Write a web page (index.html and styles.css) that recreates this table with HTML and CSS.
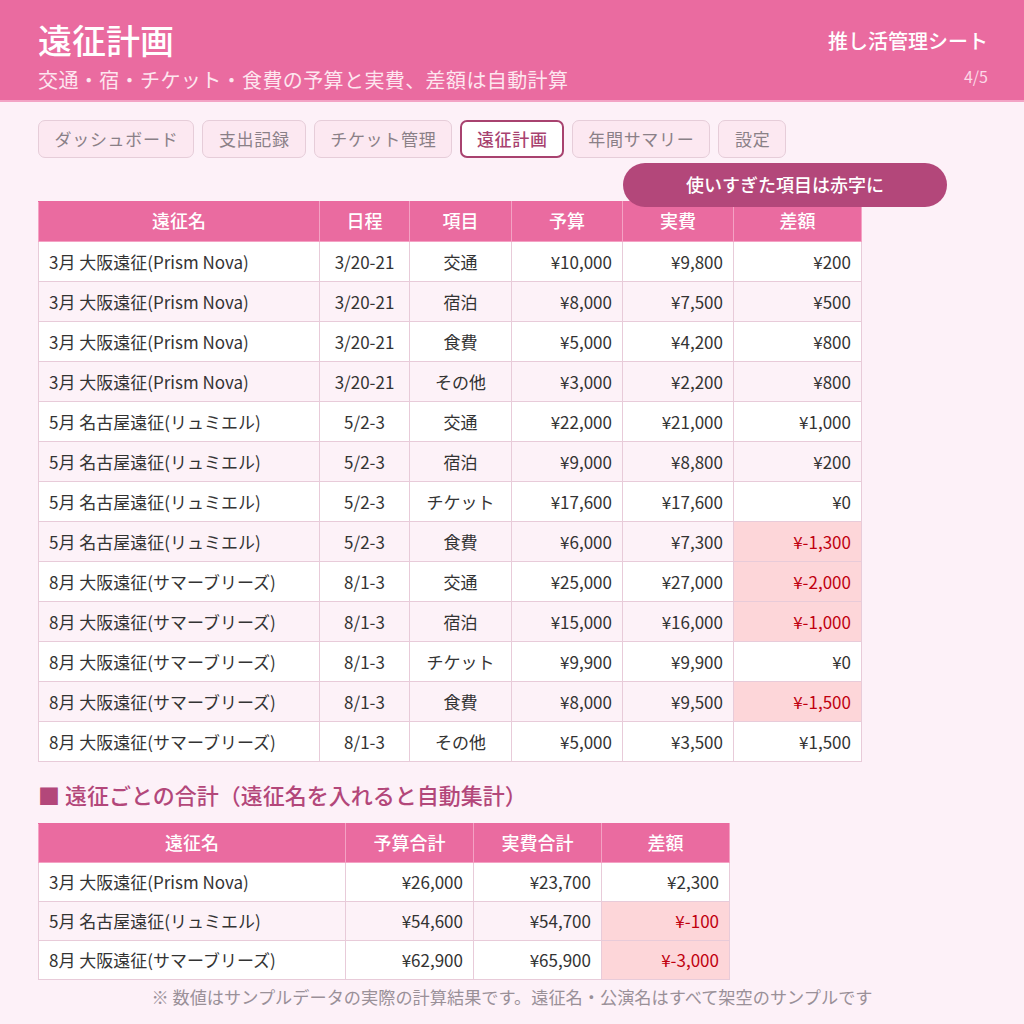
FILE: index.html
```html
<!DOCTYPE html>
<html lang="ja">
<head>
<meta charset="utf-8">
<link rel="stylesheet" href="styles.css">
</head>
<body>
<header class="hdr">
  <div class="hdr-left">
    <h1 class="title">遠征計画</h1>
    <p class="subtitle">交通・宿・チケット・食費の予算と実費、差額は自動計算</p>
  </div>
  <div class="hdr-right">
    <div class="app-name">推し活管理シート</div>
    <div class="page-no">4/5</div>
  </div>
</header>

<main class="main">
  <nav class="tabs">
    <span class="tab">ダッシュボード</span>
    <span class="tab">支出記録</span>
    <span class="tab">チケット管理</span>
    <span class="tab active">遠征計画</span>
    <span class="tab">年間サマリー</span>
    <span class="tab">設定</span>
  </nav>

  <div class="table-wrap">
    <div class="badge">使いすぎた項目は赤字に</div>
    <table class="grid main-table">
      <colgroup>
        <col style="width:281px"><col style="width:90px"><col style="width:102px">
        <col style="width:111px"><col style="width:111px"><col style="width:128px">
      </colgroup>
      <thead>
        <tr><th>遠征名</th><th>日程</th><th>項目</th><th>予算</th><th>実費</th><th>差額</th></tr>
      </thead>
      <tbody>
        <tr><td class="l">3月 大阪遠征(Prism Nova)</td><td class="c">3/20-21</td><td class="c">交通</td><td class="r">¥10,000</td><td class="r">¥9,800</td><td class="r">¥200</td></tr>
        <tr><td class="l">3月 大阪遠征(Prism Nova)</td><td class="c">3/20-21</td><td class="c">宿泊</td><td class="r">¥8,000</td><td class="r">¥7,500</td><td class="r">¥500</td></tr>
        <tr><td class="l">3月 大阪遠征(Prism Nova)</td><td class="c">3/20-21</td><td class="c">食費</td><td class="r">¥5,000</td><td class="r">¥4,200</td><td class="r">¥800</td></tr>
        <tr><td class="l">3月 大阪遠征(Prism Nova)</td><td class="c">3/20-21</td><td class="c">その他</td><td class="r">¥3,000</td><td class="r">¥2,200</td><td class="r">¥800</td></tr>
        <tr><td class="l">5月 名古屋遠征(リュミエル)</td><td class="c">5/2-3</td><td class="c">交通</td><td class="r">¥22,000</td><td class="r">¥21,000</td><td class="r">¥1,000</td></tr>
        <tr><td class="l">5月 名古屋遠征(リュミエル)</td><td class="c">5/2-3</td><td class="c">宿泊</td><td class="r">¥9,000</td><td class="r">¥8,800</td><td class="r">¥200</td></tr>
        <tr><td class="l">5月 名古屋遠征(リュミエル)</td><td class="c">5/2-3</td><td class="c">チケット</td><td class="r">¥17,600</td><td class="r">¥17,600</td><td class="r">¥0</td></tr>
        <tr><td class="l">5月 名古屋遠征(リュミエル)</td><td class="c">5/2-3</td><td class="c">食費</td><td class="r">¥6,000</td><td class="r">¥7,300</td><td class="r over">¥-1,300</td></tr>
        <tr><td class="l">8月 大阪遠征(サマーブリーズ)</td><td class="c">8/1-3</td><td class="c">交通</td><td class="r">¥25,000</td><td class="r">¥27,000</td><td class="r over">¥-2,000</td></tr>
        <tr><td class="l">8月 大阪遠征(サマーブリーズ)</td><td class="c">8/1-3</td><td class="c">宿泊</td><td class="r">¥15,000</td><td class="r">¥16,000</td><td class="r over">¥-1,000</td></tr>
        <tr><td class="l">8月 大阪遠征(サマーブリーズ)</td><td class="c">8/1-3</td><td class="c">チケット</td><td class="r">¥9,900</td><td class="r">¥9,900</td><td class="r">¥0</td></tr>
        <tr><td class="l">8月 大阪遠征(サマーブリーズ)</td><td class="c">8/1-3</td><td class="c">食費</td><td class="r">¥8,000</td><td class="r">¥9,500</td><td class="r over">¥-1,500</td></tr>
        <tr><td class="l">8月 大阪遠征(サマーブリーズ)</td><td class="c">8/1-3</td><td class="c">その他</td><td class="r">¥5,000</td><td class="r">¥3,500</td><td class="r">¥1,500</td></tr>
      </tbody>
    </table>
  </div>

  <h2 class="section-title">■ 遠征ごとの合計（遠征名を入れると自動集計）</h2>

  <table class="grid sum-table">
    <colgroup>
      <col style="width:307px"><col style="width:128px"><col style="width:128px"><col style="width:128px">
    </colgroup>
    <thead>
      <tr><th>遠征名</th><th>予算合計</th><th>実費合計</th><th>差額</th></tr>
    </thead>
    <tbody>
      <tr><td class="l">3月 大阪遠征(Prism Nova)</td><td class="r">¥26,000</td><td class="r">¥23,700</td><td class="r">¥2,300</td></tr>
      <tr><td class="l">5月 名古屋遠征(リュミエル)</td><td class="r">¥54,600</td><td class="r">¥54,700</td><td class="r over">¥-100</td></tr>
      <tr><td class="l">8月 大阪遠征(サマーブリーズ)</td><td class="r">¥62,900</td><td class="r">¥65,900</td><td class="r over">¥-3,000</td></tr>
    </tbody>
  </table>

  <p class="note">※ 数値はサンプルデータの実際の計算結果です。遠征名・公演名はすべて架空のサンプルです</p>
</main>
</body>
</html>
```

FILE: styles.css
```css
* { box-sizing: border-box; }

body {
  margin: 0;
  background: #fdf1f8;
  font-family: "Noto Sans CJK JP", "Noto Sans", sans-serif;
  color: #333;
}

.hdr {
  height: 102px;
  background: #ea6ba0;
  border-bottom: 2px solid #f3a3c5;
  display: flex;
  justify-content: space-between;
  padding: 18px 36px 0 38px;
  color: #fff;
}

.title {
  margin: 0;
  font-size: 34px;
  line-height: 44px;
  font-weight: 500;
}

.subtitle {
  margin: 4px 0 0;
  font-size: 20px;
  line-height: 28px;
  letter-spacing: 0.4px;
  color: #fde6ef;
}

.hdr-right {
  display: flex;
  flex-direction: column;
  align-items: flex-end;
}

.app-name {
  margin-top: 8px;
  font-size: 20px;
  line-height: 30px;
  font-weight: 500;
}

.page-no {
  margin-top: 10px;
  font-size: 16px;
  line-height: 20px;
  color: #fcd8e7;
}

.main {
  padding: 18px 38px 0;
}

.tabs {
  display: flex;
  gap: 8px;
}

.tab {
  height: 38px;
  padding: 0 15px 2px 15.5px;
  display: flex;
  align-items: center;
  font-size: 17px;
  letter-spacing: 0.7px;
  color: #8a8087;
  background: #fce8f1;
  border: 1px solid #e6cdd9;
  border-radius: 7px;
}

.tab.active {
  background: #fff;
  border: 2px solid #a8426f;
  padding: 0 14px 2px 14.5px;
  color: #a8426f;
  font-weight: 500;
}

.table-wrap {
  position: relative;
  margin-top: 43px;
}

.badge {
  position: absolute;
  left: 585px;
  top: -38px;
  width: 324px;
  height: 44px;
  padding-bottom: 2px;
  border-radius: 22px;
  background: #b3477a;
  color: #fff;
  font-size: 18px;
  font-weight: 500;
  display: flex;
  align-items: center;
  justify-content: center;
  z-index: 2;
}

.grid {
  border-collapse: collapse;
  table-layout: fixed;
}

.main-table { width: 823px; }
.sum-table { width: 691px; }

.grid th {
  height: 40px;
  background: #ea6ba0;
  color: #fff;
  font-size: 18px;
  font-weight: 500;
  border: 1px solid #f4a2c4;
  border-top-color: #ea6ba0;
  padding: 0 0 3px;
}

.grid td {
  height: 40px;
  font-size: 17px;
  border: 1px solid #e8cbd9;
  padding: 0 10px 1px;
  background: #fff;
  white-space: nowrap;
}

.grid tbody tr:nth-child(even) td { background: #fdf2f8; }

.sum-table th { height: 39px; }
.sum-table td { height: 39px; }

.l { text-align: left; }
.c { text-align: center; }
.r { text-align: right; }

.grid tbody tr td.over {
  background: #fdd6d9;
  color: #c0000f;
}

.section-title {
  margin: 17px 0 0;
  height: 44px;
  font-size: 22px;
  line-height: 30px;
  font-weight: 500;
  color: #b3477a;
}

.note {
  margin: 4px 0 0;
  text-align: center;
  font-size: 17.2px;
  color: #9a9098;
}
```
